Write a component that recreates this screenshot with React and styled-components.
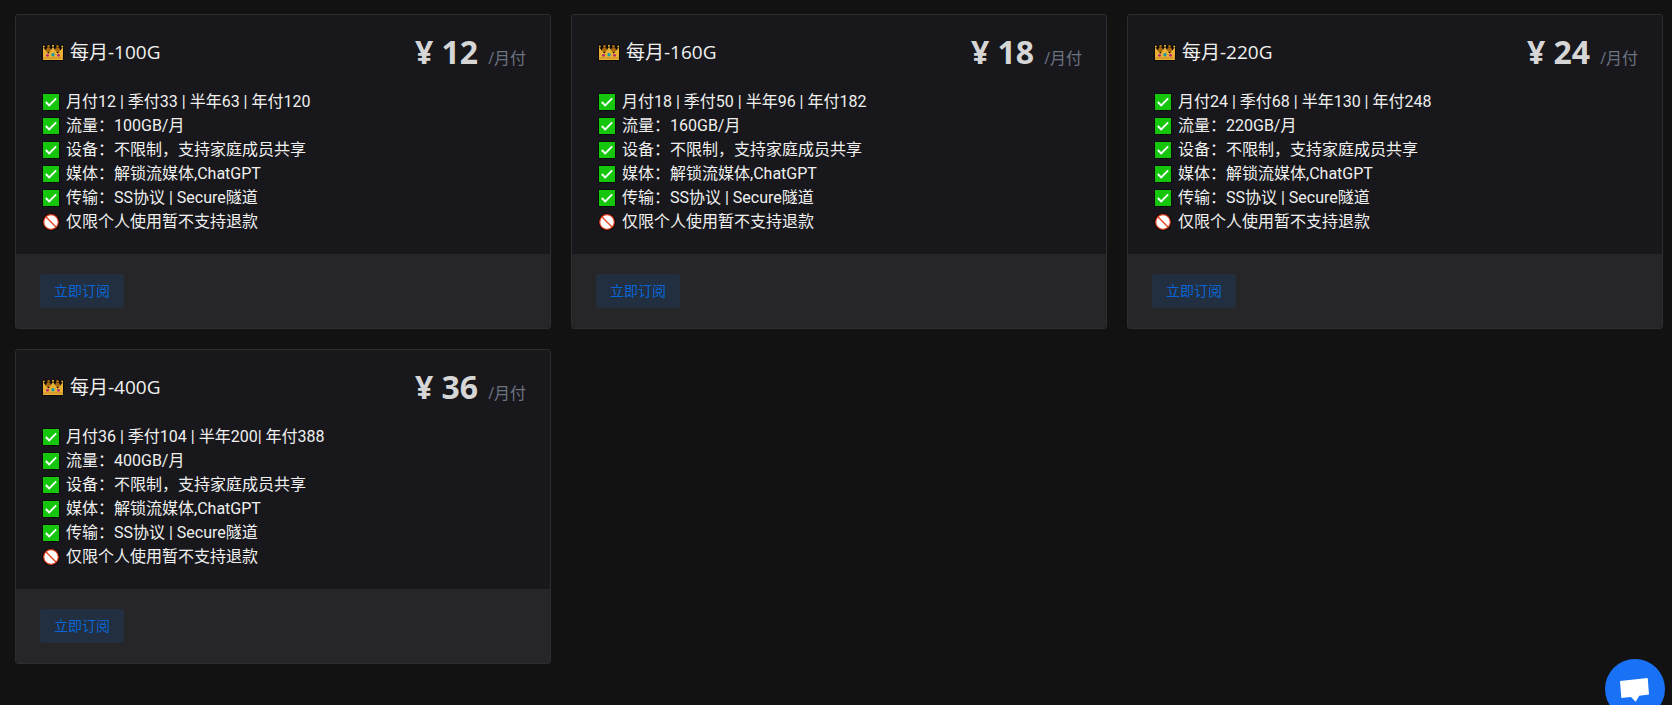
import React from "react";
import styled, { createGlobalStyle } from "styled-components";

const cjk = '"Noto Sans CJK SC", sans-serif';

const GlobalStyle = createGlobalStyle`
  * { box-sizing: border-box; }
  body {
    margin: 0;
    background: #121212;
    color: #f0f0f0;
    font-family: Roboto, ${cjk};
    font-size: 16px;
    line-height: 24px;
  }
`;

const PlanGrid = styled.main`
  display: grid;
  grid-template-columns: repeat(3, minmax(0, 1fr));
  gap: 20px;
  padding: 14px 9px 20px 15px;

  @media (max-width: 1200px) {
    grid-template-columns: repeat(2, minmax(0, 1fr));
  }
  @media (max-width: 760px) {
    grid-template-columns: minmax(0, 1fr);
  }
`;

const Card = styled.article`
  display: flex;
  flex-direction: column;
  overflow: hidden;
  border: 1px solid #2d2d30;
  border-radius: 3px;
  background: #18181c;
`;

const CardHeader = styled.header`
  display: flex;
  align-items: center;
  justify-content: space-between;
  padding: 17px 24px 18px;
`;

const Title = styled.h2`
  display: flex;
  align-items: center;
  gap: 4px;
  margin: 0;
  font-family: "Open Sans", ${cjk};
  font-size: 19px;
  line-height: 24px;
  font-weight: 400;
`;

const Price = styled.div`
  display: flex;
  align-items: baseline;
  gap: 10px;
  font-family: "Open Sans", ${cjk};
  white-space: nowrap;
`;

const Amount = styled.strong`
  color: #d6d6d6;
  font-size: 32px;
  line-height: 40px;
  font-weight: 700;
`;

const Unit = styled.span`
  color: #6b7280;
  font-size: 16px;
  line-height: 24px;
`;

const FeatureList = styled.ul`
  flex: 1;
  margin: 0;
  padding: 0 24px 20px;
  list-style: none;
`;

const Feature = styled.li`
  display: flex;
  align-items: center;
  gap: 4px;
`;

const Emoji = styled.svg`
  flex: none;
  display: block;
`;

const CardFooter = styled.footer`
  padding: 20px 24px;
  background: #262628;
`;

const SubscribeButton = styled.button`
  display: block;
  height: 34px;
  padding: 0 14px;
  border: 0;
  border-radius: 3px;
  background: #222f40;
  color: #0a66d6;
  font-family: inherit;
  font-size: 14px;
  line-height: 34px;
  cursor: pointer;
`;

const ChatButton = styled.button`
  position: fixed;
  right: 7px;
  bottom: -14px;
  width: 60px;
  height: 60px;
  padding: 0;
  border: 0;
  border-radius: 50%;
  background: #1972f5;
  cursor: pointer;
`;

const Crown = () => (
  <Emoji width="26" height="20" viewBox="0 0 26 20" aria-hidden="true">
    <path d="M2 2.500h2.500L6 4l2-2 2 2 2-2.200h2L16 4l2-2 2 2 1.500-1.500H24V19H2z" fill="#0b0907" />
    <path d="M5 10L7 5.500h3l1.500 3.500L13 5l1.500 4L16 5.500h3l2 4.500z" fill="#a9680c" />
    <path d="M3 18V5l4 5 1.500 1.500L13 5l4.500 6.500L19 10l4-5v13z" fill="#e8b035" />
    <circle cx="3.800" cy="4.500" r="1" fill="#e8b035" />
    <circle cx="8.500" cy="4.300" r="1.200" fill="#b87410" />
    <circle cx="13" cy="3.800" r="1.100" fill="#e8b035" />
    <circle cx="17.500" cy="4.300" r="1.200" fill="#b87410" />
    <circle cx="22.200" cy="4.500" r="1" fill="#e8b035" />
    <path d="M3 16h20" stroke="#c58a24" />
    <circle cx="7.500" cy="13.300" r="1.400" fill="#b8237d" />
    <circle cx="13" cy="12.800" r="1.700" fill="#159cad" />
    <circle cx="18.500" cy="13.300" r="1.400" fill="#b8237d" />
  </Emoji>
);

const Check = () => (
  <Emoji width="22" height="18" viewBox="0 0 22 18" aria-hidden="true">
    <rect x="2" width="18" height="18" fill="#071006" />
    <rect x="3" y="1" width="16" height="16" fill="#16c60c" />
    <path d="M5.800 9l3.400 3.400L16.200 5.400" fill="none" stroke="#fff" strokeWidth="1.800" />
  </Emoji>
);

const Forbidden = () => (
  <Emoji width="22" height="18" viewBox="0 0 22 18" aria-hidden="true">
    <circle cx="11" cy="9" r="8.800" fill="#0a0605" />
    <circle cx="11" cy="9" r="7.300" fill="#fff" stroke="#e2401f" strokeWidth="1.200" />
    <path d="M5.800 3.800l10.400 10.400" stroke="#e2401f" strokeWidth="1.300" />
  </Emoji>
);

const plans = [
  { traffic: 100, price: 12, periods: "月付12 | 季付33 | 半年63 | 年付120" },
  { traffic: 160, price: 18, periods: "月付18 | 季付50 | 半年96 | 年付182" },
  { traffic: 220, price: 24, periods: "月付24 | 季付68 | 半年130 | 年付248" },
  { traffic: 400, price: 36, periods: "月付36 | 季付104 | 半年200| 年付388" },
];

function PlanCard({ traffic, price, periods }) {
  const features = [
    periods,
    `流量：${traffic}GB/月`,
    "设备：不限制，支持家庭成员共享",
    "媒体：解锁流媒体,ChatGPT",
    "传输：SS协议 | Secure隧道",
  ];
  return (
    <Card>
      <CardHeader>
        <Title>
          <Crown />
          {`每月-${traffic}G`}
        </Title>
        <Price>
          <Amount>{`¥ ${price}`}</Amount>
          <Unit>/月付</Unit>
        </Price>
      </CardHeader>
      <FeatureList>
        {features.map((text) => (
          <Feature key={text}>
            <Check />
            {text}
          </Feature>
        ))}
        <Feature>
          <Forbidden />
          仅限个人使用暂不支持退款
        </Feature>
      </FeatureList>
      <CardFooter>
        <SubscribeButton type="button">立即订阅</SubscribeButton>
      </CardFooter>
    </Card>
  );
}

export default function App() {
  return (
    <>
      <GlobalStyle />
      <PlanGrid>
        {plans.map((plan) => (
          <PlanCard key={plan.traffic} {...plan} />
        ))}
      </PlanGrid>
      <ChatButton type="button" aria-label="在线客服">
        <Emoji width="60" height="60" viewBox="0 0 60 60" aria-hidden="true">
          <path d="M15 22l27.700-3L44 35.500l-9.700 1.200-3.600 6L26 38l-9.700 1z" fill="#fff" />
        </Emoji>
      </ChatButton>
    </>
  );
}
